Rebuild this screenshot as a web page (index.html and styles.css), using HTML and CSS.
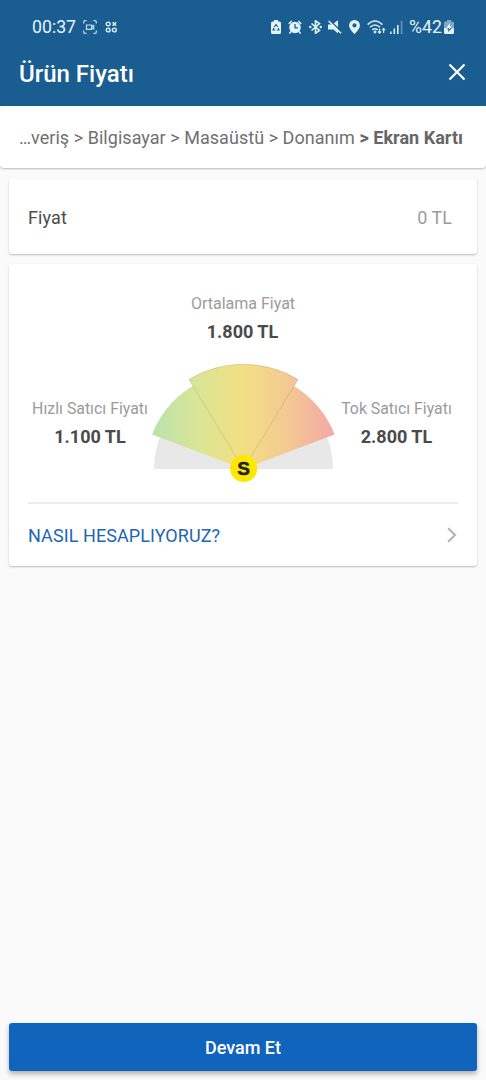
FILE: index.html
```html
<!DOCTYPE html>
<html lang="tr">
<head>
<meta charset="utf-8">
<meta name="viewport" content="width=device-width, initial-scale=1">
<title>Ürün Fiyatı</title>
<link rel="stylesheet" href="styles.css">
</head>
<body>
<div class="screen">
  <header class="header">
    <div class="status">
      <div class="status-left">
        <span class="clock">00:37</span>
        <svg class="icon-capture" width="14" height="14" viewBox="0 0 14 14" fill="none" stroke="#b9e2fb" stroke-width="1.2">
          <path d="M.7 3.500V2Q.7.7 2 .7h1.500M10.500.7H12q1.300 0 1.300 1.300v1.500M13.300 10.500V12q0 1.300-1.300 1.300h-1.500M3.500 13.300H2Q.7 13.300.7 12v-1.500"/>
          <path d="M3.500 5h5v4.400h-5zM8.500 6.500l2.200-1v3.400l-2.200-1"/>
        </svg>
        <svg class="icon-dots" width="13" height="12" viewBox="0 0 13 12" fill="none" stroke="#e3f4ff" stroke-width="1.400">
          <circle cx="3.200" cy="3" r="1.900"/><circle cx="3.200" cy="9" r="1.900"/><circle cx="9.300" cy="9" r="1.900"/>
          <path d="M7.600 1.300l3.500 3.500M11.100 1.300L7.600 4.800"/>
        </svg>
      </div>
      <div class="status-right">
        <svg width="10" height="14" viewBox="0 0 10 14">
          <path fill="#e3f4ff" d="M3 0h4v1.500h1.500Q10 1.500 10 3v9.500Q10 14 8.500 14h-7Q0 14 0 12.500V3q0-1.500 1.500-1.500H3z"/>
          <path d="M3.300 7L5 4.500 6.700 7M7.300 8l.7 2H5.700M4.300 10H2l1-2.200" fill="none" stroke="#1a5e91" stroke-width="1.100"/>
        </svg>
        <svg class="icon-alarm" width="14" height="14" viewBox="0 0 14 14">
          <circle cx="7" cy="7.500" r="5.700" fill="#e3f4ff"/>
          <path d="M.8 4L3.800 1M13.200 4l-3-3M3 11.500l-1.500 2M11 11.500l1.500 2" stroke="#e3f4ff" stroke-width="1.600"/>
          <path d="M7 4v3.800h3" fill="none" stroke="#1a5e91" stroke-width="1.300"/>
        </svg>
        <svg class="icon-bluetooth" width="13" height="14" viewBox="0 0 13 14">
          <path d="M2.500 3.500l8 7L6.500 13.200V.8l4 2.700-8 7" fill="none" stroke="#e3f4ff" stroke-width="1.600"/>
          <circle cx="1.300" cy="7" r="1.200" fill="#e3f4ff"/><circle cx="11.700" cy="7" r="1.200" fill="#e3f4ff"/>
        </svg>
        <svg class="icon-mute" width="14" height="14" viewBox="0 0 14 14">
          <path d="M0 4.500h4L10 .3v13.200L5.500 9.500H0z" fill="#e3f4ff"/>
          <path d="M1.800.3L14 12.300" stroke="#1a5e91" stroke-width="1.500"/>
          <path d="M.7 1L13 13.300" stroke="#e3f4ff" stroke-width="1.500"/>
        </svg>
        <svg class="icon-pin" width="11" height="14" viewBox="0 0 11 14">
          <path fill="#e3f4ff" fill-rule="evenodd" d="M5.500 0A5.400 5.400 0 0 0 .1 5.400C.1 9 5.500 14 5.500 14S10.900 9 10.900 5.400A5.400 5.400 0 0 0 5.500 0zm0 3.300a2.100 2.100 0 1 1 0 4.200 2.100 2.100 0 0 1 0-4.200z"/>
        </svg>
        <svg class="icon-wifi" width="19" height="14" viewBox="0 0 19 14" fill="none" stroke="#cfecfd" stroke-width="1.500">
          <path d="M.6 4.600Q8 -2.600 15.400 4.600M3 7.300q5-4.600 10 0M5.400 9.900q2.600-2.300 5.200 0"/>
          <circle cx="8" cy="12" r=".7" fill="#cfecfd"/>
          <path d="M12.500 8.500v4.600M10.900 11.500l1.600 1.600 1.600-1.600M16.600 13V8.500M15 10.100l1.600-1.600 1.600 1.600" stroke-width="1.200"/>
        </svg>
        <svg class="icon-signal" width="13" height="13" viewBox="0 0 13 13" fill="#cfecfd">
          <path d="M0 10.500h1.600V13H0zM3.500 7.500h1.600V13H3.500zM7 4h1.600v9H7z"/><path d="M10.800 0h1.600v13h-1.600z" opacity=".4"/>
        </svg>
        <span class="percent">%42</span>
        <svg class="icon-battery" width="10" height="14" viewBox="0 0 10 14">
          <path fill="#7fa9c9" d="M3 0h4v1.500h1.500Q10 1.500 10 3v5H0V3q0-1.500 1.500-1.500H3z"/>
          <path fill="#e3f4ff" d="M0 8h10v4.500Q10 14 8.500 14h-7Q0 14 0 12.500z"/>
          <path d="M6 6.500v1.500h2L4.300 12V9.300H2.500z" fill="#1a5e91"/>
          <path d="M6 3L2.500 8h2.700L4.700 10 7.800 6.500H5.600z" fill="#fff"/>
        </svg>
      </div>
    </div>
    <div class="titlebar">
      <h1 class="title">Ürün Fiyatı</h1>
      <svg class="close" width="18" height="18" viewBox="0 0 18 18" fill="none" stroke="#fff" stroke-width="2.200"><path d="M1.500 1.500l15 15M16.500 1.500l-15 15"/></svg>
    </div>
  </header>

  <nav class="crumbs"><span class="crumb-path">…veriş &gt; Bilgisayar &gt; Masaüstü &gt; Donanım</span> <b class="crumb-current">&gt; Ekran Kartı</b></nav>

  <main class="content">
    <section class="card price">
      <span class="price-label">Fiyat</span>
      <span class="price-value">0 TL</span>
    </section>

    <section class="card estimate">
      <div class="figure average">
        <span class="label label-average">Ortalama Fiyat</span>
        <strong class="amount">1.800 TL</strong>
      </div>
      <div class="gauge-row">
        <div class="figure">
          <span class="label label-side">Hızlı Satıcı Fiyatı</span>
          <strong class="amount">1.100 TL</strong>
        </div>
        <svg class="gauge" width="186" height="122" viewBox="0 0 186 122">
          <defs>
            <linearGradient id="range" gradientUnits="userSpaceOnUse" x1="1" y1="0" x2="184" y2="0">
              <stop offset="0" stop-color="#b9e3ae"/><stop offset=".25" stop-color="#dbe596"/>
              <stop offset=".5" stop-color="#f3df83"/><stop offset=".75" stop-color="#f3c894"/>
              <stop offset="1" stop-color="#f4a8a8"/>
            </linearGradient>
          </defs>
          <path d="M3 108a89.500 89.500 0 0 1 179 0z" fill="#e8e8e8"/>
          <path d="M92.500 108L1 73.500a97.800 97.800 0 0 1 182.500 0z" fill="url(#range)"/>
          <path d="M92.500 108L38 18.500a104.800 104.800 0 0 1 109 0z" fill="url(#range)" stroke="#927f50" stroke-opacity=".35" stroke-width=".7"/>
          <circle cx="92.700" cy="107.500" r="13.600" fill="#ffe800"/>
          <text class="gauge-letter" x="92.700" y="114" text-anchor="middle">S</text>
        </svg>
        <div class="figure firm">
          <span class="label label-side">Tok Satıcı Fiyatı</span>
          <strong class="amount">2.800 TL</strong>
        </div>
      </div>
      <a class="how">
        <span class="how-text">NASIL HESAPLIYORUZ?</span>
        <svg width="10" height="16" viewBox="0 0 10 16" fill="none" stroke="#b5b5b5" stroke-width="2.200"><path d="M1.200 1.300L8 8l-6.800 6.700"/></svg>
      </a>
    </section>
  </main>

  <button class="continue">Devam Et</button>
</div>
</body>
</html>
```

FILE: styles.css
```css
* { box-sizing: border-box; }
body { margin: 0; font-family: Roboto, "Liberation Sans", sans-serif; background: #fafafa; }
svg { display: block; flex: none; }
.screen { width: 486px; height: 1080px; display: flex; flex-direction: column; overflow: hidden; }
.header { height: 106px; flex: none; background: #1a5e91; color: #fff; }
.status { height: 54px; padding: 0 32px; display: flex; align-items: center; justify-content: space-between; color: #e3f4ff; }
.status-left, .status-right { display: flex; align-items: center; }
.clock { width: 44px; font-size: 17.700px; line-height: 20px; margin-top: -1px; white-space: nowrap; }
.icon-capture { margin-left: 7px; }
.icon-dots { margin-left: 8px; }
.icon-alarm { margin-left: 7px; }
.icon-bluetooth { margin-left: 7px; }
.icon-mute { margin-left: 6px; }
.icon-pin { margin-left: 7px; }
.icon-wifi { margin-left: 7px; }
.icon-signal { margin-left: 4px; }
.percent { margin-left: 6px; width: 34px; font-size: 17.700px; line-height: 20px; margin-top: -1px; white-space: nowrap; }
.icon-battery { margin-left: 1px; }
.titlebar { height: 38px; padding: 1px 20px 0 19px; display: flex; align-items: center; justify-content: space-between; }
.title { margin: 0; font-size: 24px; font-weight: 500; line-height: 38px; }
.close { margin-bottom: 3px; }
.crumbs { height: 62px; flex: none; padding: 0 19px; line-height: 63px; font-size: 18px; letter-spacing: .04px; white-space: nowrap; color: #707070; background: #fff; border-radius: 4px; box-shadow: 0 1px 2px rgba(0, 0, 0, .25); }
.crumb-current { color: #666; }
.content { flex: 1; padding: 11px 9px 0; }
.card { background: #fff; border-radius: 3px; box-shadow: 0 1px 2px rgba(0, 0, 0, .25); }
.price { height: 75px; padding: 1px 25px 0 19px; display: flex; align-items: center; justify-content: space-between; font-size: 18px; }
.price-label { color: #4c4c4c; letter-spacing: .1px; }
.price-value { color: #9b9b9b; }
.estimate { height: 302px; margin-top: 10px; padding: 28px 19px 0; }
.figure { display: flex; flex-direction: column; align-items: center; white-space: nowrap; }
.label { font-size: 16px; line-height: 24px; color: #9b9b9b; }
.label-side { font-size: 15.850px; }
.amount { font-size: 18px; line-height: 22px; margin-top: 5px; font-weight: 700; color: #4a4a4a; }
.average .amount { padding-right: 1px; }
.gauge-row { height: 159px; display: grid; grid-template-columns: 124px 186px 120px; align-items: start; }
.gauge-row .figure { padding-top: 54px; }
.gauge-row .firm { padding-right: 3px; }
.gauge { margin-top: 18px; margin-left: -1px; }
.how { height: 64px; padding-right: 1px; padding-bottom: 1px; border-top: 2px solid #ebebeb; display: flex; align-items: center; justify-content: space-between; color: #1d66b5; font-size: 18px; }
.how-text { letter-spacing: .08px; padding-top: 1px; }
.gauge-letter { font: 700 19px "Liberation Sans", sans-serif; fill: #222; stroke: #222; stroke-width: .5; }
.continue { flex: none; height: 48px; margin: 0 9px 9px; border: 0; border-radius: 3px; background: #1164bb; color: #fff; font: 500 18px Roboto, "Liberation Sans", sans-serif; box-shadow: 0 3px 5px rgba(0, 0, 0, .3); }
```
